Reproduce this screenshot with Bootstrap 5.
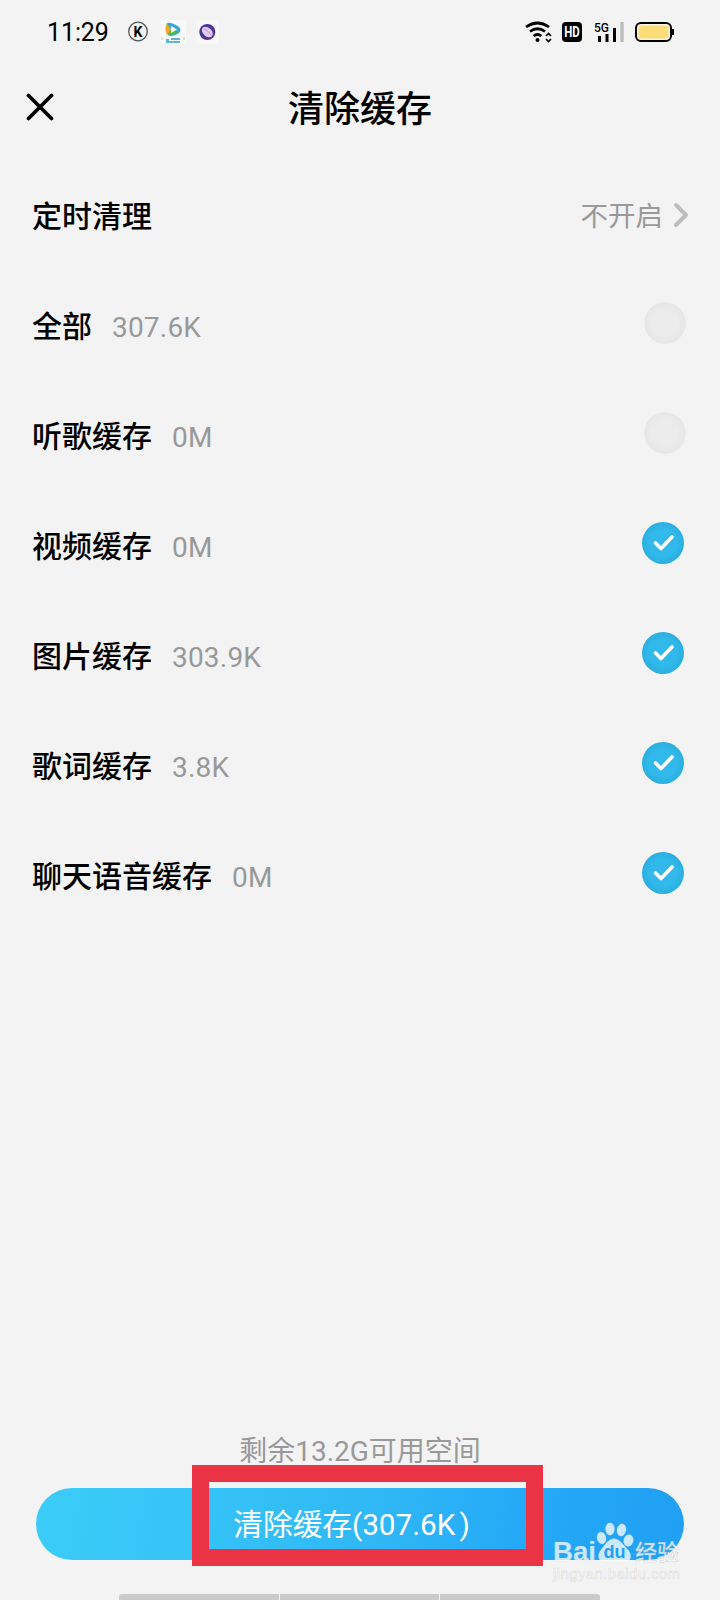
<!DOCTYPE html>
<html lang="zh-CN">
<head>
<meta charset="utf-8">
<meta name="viewport" content="width=device-width, initial-scale=1">
<title>清除缓存</title>
<link href="https://cdn.jsdelivr.net/npm/bootstrap@5.3.0/dist/css/bootstrap.min.css" rel="stylesheet">
<style>
body{background:#f3f3f3;color:#000;font-family:Roboto,"Noto Sans CJK SC",sans-serif;overflow:hidden}
.screen{width:720px;height:1600px}
.status{height:64px;padding-left:47px}
.clock{font:25px/30px Roboto,sans-serif;letter-spacing:-.1px;width:80px;padding-top:2px}
.title-bar{height:97px;padding-bottom:5px}
.page-title{font-size:36px;font-weight:500;line-height:54px}
.close-btn{left:26px;top:29px;line-height:0}
.setting{height:110px;padding:0 30px 0 32px}
.label-text{font-size:30px;font-weight:500;line-height:44px;padding-top:1px}
.value{font-size:28px;letter-spacing:.2px;color:#999;font-weight:400;padding-top:3px}
.schedule{font-size:27.5px;letter-spacing:0;padding-top:2px;margin-right:9px}
.tick{width:42px;height:42px;margin:0 6px 7px 0}
.tick.off{margin-right:4px}
.space{font-size:28px;line-height:40px;color:#999;height:57px;padding-top:1px}
.clear-btn,.clear-btn:hover{width:648px;height:72px;padding:3px 17px 0 0;border:0;color:#fff;font-size:29.7px;background:linear-gradient(100deg,#3bcdf8,#30b9f5 50%,#25a9f7 75%,#209ff3)}
.highlight{left:192px;top:1465px;width:351px;height:101px;border:17px solid #ea3345}
.brand{left:550px;top:1518px}
.nav-strip{left:119px;top:1594px;width:481px;height:6px;background:#cbcbcb;border-radius:3px 3px 0 0}
.nav-strip i{position:absolute;width:1px;height:6px;background:#f3f3f3}
</style>
</head>
<body>
<main class="screen position-relative d-flex flex-column">
  <header class="status d-flex align-items-center">
    <span class="clock">11:29</span>
    <svg width="100" height="30" viewBox="127 17 100 30">
      <circle cx="138" cy="31.5" r="9.3" fill="none" stroke="#555" stroke-width="1.3"/>
      <text x="138" y="36.5" text-anchor="middle" font-family="Roboto" font-weight="700" font-size="14">K</text>
      <rect x="160" y="20" width="26" height="24" rx="4" fill="#f8fafa"/>
      <path d="M167 23q3-1 9 2t4 7q-4 4-10 4-5-1-4-9z" fill="#3da5dd"/>
      <path d="M167 23q-3 6 0 12l4-5z" fill="#f5a623"/>
      <path d="M168 35q7 0 12-4l-9-1z" fill="#52bd3c"/>
      <path d="M171 26l6 3.500-6 3.500z" fill="#fff"/>
      <path d="M166 40h3m2-1h9M166 42h14" stroke="#2f9fc1" stroke-width="1.500"/>
      <path d="M162 37v3m22-3v3" stroke="#9dcbd8"/>
      <rect x="196" y="20" width="23" height="24" rx="4" fill="#f8f8fa"/>
      <circle cx="207.3" cy="32" r="8" fill="#4b3793"/>
      <ellipse cx="207.3" cy="32" rx="6.3" ry="4.3" transform="rotate(42 207.3 32)" fill="#e2c8f2"/>
      <path d="M204 29q3 0 7 6" stroke="#b89ada" fill="none"/>
    </svg>
    <svg class="ms-auto me-4" width="172" height="34" viewBox="524 15 172 34" fill="none" stroke="#000">
      <path d="M526 27Q537.5 19 549 27M530 31.5q7.500-5.500 15 0M533.700 36q3.800-3 7.600 0" stroke-width="2.700"/>
      <circle cx="537.500" cy="40" r="2" fill="#000" stroke="none"/>
      <path d="M546 36l2.500-2.500 2.500 2.500M546 39l2.500 2.500 2.500-2.500" stroke-width="1.700"/>
      <rect x="562" y="22" width="20" height="20" rx="4" fill="#000" stroke="none"/>
      <text x="572" y="37.200" fill="#fff" stroke="none" text-anchor="middle" font-family="Roboto" font-weight="700" font-size="14" textLength="15.500" lengthAdjust="spacingAndGlyphs">HD</text>
      <text x="594" y="32" fill="#000" stroke="none" font-family="Roboto" font-weight="500" font-size="12.500" textLength="15" lengthAdjust="spacingAndGlyphs">5G</text>
      <path d="M599.500 36v6M607 34v8M614.500 28v14" stroke-width="3"/>
      <path d="M622 22v20" stroke="#bbb" stroke-width="3.300"/>
      <rect x="636" y="23" width="35" height="18" rx="5" fill="#f9f5e5" stroke-width="2"/>
      <rect x="638.500" y="25.500" width="30" height="13" rx="3" fill="#fadd79" stroke="none"/>
      <path d="M673 29v6" stroke-width="2"/>
    </svg>
  </header>

  <div class="title-bar position-relative d-flex align-items-center justify-content-center">
    <button class="close-btn btn border-0 p-0 position-absolute" aria-label="关闭"><svg width="28" height="28" viewBox="0 0 28 28"><path d="M2.500 2.500l23 23m0-23l-23 23" stroke="#000" stroke-width="3.700" stroke-linecap="round"/></svg></button>
    <h1 class="page-title m-0">清除缓存</h1>
  </div>

  <section>
    <div class="setting d-flex align-items-center">
      <span class="label-text">定时清理</span>
      <span class="value schedule ms-auto">不开启</span>
      <svg width="18" height="28" viewBox="0 0 18 28"><path d="M4 3l10 10L4 23" fill="none" stroke="#bdbdbd" stroke-width="4" stroke-linecap="round" stroke-linejoin="round"/></svg>
    </div>
    <div class="setting d-flex align-items-center"><span class="label-text">全部</span><span class="value ps-3 ms-1">307.6K</span><svg class="tick off ms-auto"><use href="#off"/></svg></div>
    <div class="setting d-flex align-items-center"><span class="label-text">听歌缓存</span><span class="value ps-3 ms-1">0M</span><svg class="tick off ms-auto"><use href="#off"/></svg></div>
    <div class="setting d-flex align-items-center"><span class="label-text">视频缓存</span><span class="value ps-3 ms-1">0M</span><svg class="tick ms-auto"><use href="#on"/></svg></div>
    <div class="setting d-flex align-items-center"><span class="label-text">图片缓存</span><span class="value ps-3 ms-1">303.9K</span><svg class="tick ms-auto"><use href="#on"/></svg></div>
    <div class="setting d-flex align-items-center"><span class="label-text">歌词缓存</span><span class="value ps-3 ms-1">3.8K</span><svg class="tick ms-auto"><use href="#on"/></svg></div>
    <div class="setting d-flex align-items-center"><span class="label-text">聊天语音缓存</span><span class="value ps-3 ms-1">0M</span><svg class="tick ms-auto"><use href="#on"/></svg></div>
  </section>

  <footer class="mt-auto text-center" style="height:169px">
    <div class="space">剩余13.2G可用空间</div>
    <button class="clear-btn btn rounded-pill">清除缓存(307.6K<span class="ps-1">)</span></button>
  </footer>

  <div class="highlight position-absolute"></div>
  <svg class="brand position-absolute" width="136" height="64" viewBox="550 1518 136 64" fill="#fff" fill-opacity=".76" stroke="#cfcfcf" stroke-opacity=".35" stroke-width=".6">
    <text x="553" y="1561" font-family="Liberation Sans" font-weight="700" font-size="28" textLength="43" lengthAdjust="spacingAndGlyphs">Bai</text>
    <ellipse cx="601.500" cy="1538" rx="4.500" ry="6" transform="rotate(-15 601.5 1538)"/>
    <ellipse cx="610" cy="1529" rx="4.500" ry="6.200"/>
    <ellipse cx="621.500" cy="1530" rx="4.500" ry="6.200" transform="rotate(12 621.5 1530)"/>
    <ellipse cx="628.500" cy="1540.500" rx="4.800" ry="6" transform="rotate(15 628.5 1540.5)"/>
    <path d="M607 1542q7-7 14 0l8 9q4 6-1 11h-26q-6-4-2-11z"/>
    <text x="614.500" y="1558" fill="#229ff4" fill-opacity="1" stroke="none" text-anchor="middle" font-family="Liberation Sans" font-weight="700" font-size="18">du</text>
    <text x="635" y="1560" stroke="#bbb" stroke-opacity=".6" font-family="Noto Sans CJK SC" font-weight="500" font-size="22" textLength="44">经验</text>
    <text x="553" y="1579" stroke="#bbb" stroke-opacity=".45" font-family="Liberation Sans" font-size="15" textLength="127">jingyan.baidu.com</text>
  </svg>
  <div class="nav-strip position-absolute"><i style="left:160px"></i><i style="left:320px"></i></div>
</main>
<svg width="0" height="0" class="position-absolute">
  <defs>
    <radialGradient id="blue"><stop offset=".65" stop-color="#30b9ea"/><stop offset="1" stop-color="#2aaedf"/></radialGradient>
    <radialGradient id="grey"><stop offset=".6" stop-color="#ececec"/><stop offset="1" stop-color="#e6e6e6"/></radialGradient>
    <symbol id="on" viewBox="0 0 42 42"><circle cx="21" cy="21" r="21" fill="url(#blue)"/><path d="M13.500 21l5.500 5.500L30 15" fill="none" stroke="#fff" stroke-width="3.600" stroke-linecap="round" stroke-linejoin="round"/></symbol>
    <symbol id="off" viewBox="0 0 42 42"><circle cx="21" cy="21" r="20.800" fill="url(#grey)"/></symbol>
  </defs>
</svg>
<script src="https://cdn.jsdelivr.net/npm/bootstrap@5.3.0/dist/js/bootstrap.bundle.min.js"></script>
</body>
</html>
